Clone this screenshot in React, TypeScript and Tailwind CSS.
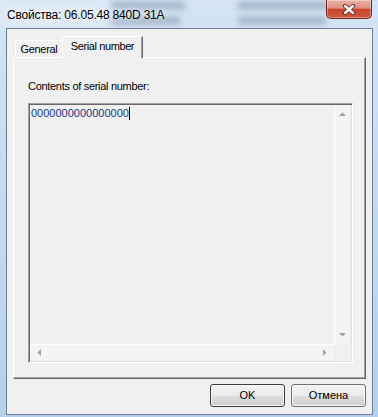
import React from 'react';

const font = { fontFamily: '"Liberation Sans", Arial, sans-serif' };

type Dir = 'up' | 'down' | 'left' | 'right';

const arrowPoints: Record<Dir, string> = {
  up: '0,4 7,4 3.5,0.5',
  down: '0,0 7,0 3.5,3.5',
  left: '4,0 4,7 0.5,3.5',
  right: '0,0 0,7 3.5,3.5',
};

function Arrow({ dir }: { dir: Dir }) {
  const vertical = dir === 'up' || dir === 'down';
  return (
    <svg width={vertical ? 7 : 4} height={vertical ? 4 : 7} viewBox={vertical ? '0 0 7 4' : '0 0 4 7'}>
      <polygon points={arrowPoints[dir]} fill="#a3a3a3" />
    </svg>
  );
}

function CloseGlyph() {
  return (
    <svg width="14" height="11" viewBox="0 0 14 11">
      <path d="M3 2 L11 9 M11 2 L3 9" stroke="#5b2a22" strokeWidth="4.2" strokeLinecap="round" />
      <path d="M3 2 L11 9 M11 2 L3 9" stroke="#ffffff" strokeWidth="2.4" strokeLinecap="round" />
    </svg>
  );
}

const App: React.FC = () => {
  return (
    <div
      className="relative w-[378px] h-[417px] overflow-hidden flex flex-col bg-gradient-to-b from-[#d4e4f4] to-[#b5d0ed] text-black"
      style={font}
    >
      {/* glass blur of what's behind the title bar */}
      <div className="absolute left-[110px] top-[2px] w-[75px] h-[7px] bg-[#7d8ea4] opacity-60 blur-[3px]" />
      <div className="absolute left-[110px] top-[17px] w-[70px] h-[7px] bg-[#7d8ea4] opacity-60 blur-[3px]" />
      <div className="absolute left-[238px] top-[2px] w-[90px] h-[7px] bg-[#7d8ea4] opacity-60 blur-[3px]" />
      <div className="absolute left-[238px] top-[17px] w-[88px] h-[7px] bg-[#7d8ea4] opacity-60 blur-[3px]" />
      <div className="absolute left-[0px] top-[0px] w-[110px] h-[28px] bg-[#e8f0f9] opacity-60 blur-[6px]" />

      {/* title bar */}
      <div className="relative h-[28px] flex justify-between items-start">
        <div className="pl-[7px] pt-[8px] text-[12px] leading-[14px] tracking-[-0.2px] text-black [text-shadow:0_0_6px_#ffffff]">
          Свойства: 06.05.48 840D 31A
        </div>
        <div className="mr-[6px] w-[46px] h-[19px] rounded-b-[5px] border border-t-0 border-[#6a2a20] bg-[linear-gradient(#ebb3a6_0%,#dc8f7e_45%,#c8442c_52%,#d2583c_100%)] shadow-[inset_0_0_0_1px_rgba(255,255,255,0.35)] flex items-center justify-center">
          <CloseGlyph />
        </div>
      </div>

      {/* client area */}
      <div className="relative ml-[6px] w-[367px] h-[387px] border border-[#6f7f93] bg-[#f0f0f0] flex flex-col text-[11px] leading-[13px]">
        {/* tab headers */}
        <div className="mt-[7px] h-[21px] pl-[8px] flex items-end">
          <div className="w-[48px] h-[17px] border-t border-l border-white border-r border-r-[#a0a0a0] rounded-tl-[2px] pt-[2px] flex justify-center tracking-[-0.3px]">
            General
          </div>
          <div className="relative z-10 -ml-px -mb-px w-[81px] h-[22px] bg-[#f0f0f0] border-t border-l border-white border-r border-r-[#696969] shadow-[inset_-1px_0_#a0a0a0] rounded-tl-[2px] pt-[3px] flex justify-center tracking-[-0.4px]">
            Serial number
          </div>
        </div>

        {/* tab panel */}
        <div className="ml-[6px] w-[353px] h-[322px] border-t border-l border-white border-r border-b border-r-[#696969] border-b-[#696969] shadow-[inset_-1px_-1px_#a0a0a0] flex flex-col pl-[14px] pt-[22px]">
          <div className="tracking-[-0.3px]">Contents of serial number:</div>

          {/* read-only multiline textbox */}
          <div className="mt-[10px] w-[325px] h-[260px] border border-t-[#a0a0a0] border-l-[#a0a0a0] border-r-white border-b-white shadow-[inset_1px_1px_#696969,inset_-1px_-1px_#e3e3e3] p-px">
            <div className="w-full h-full grid grid-cols-[1fr_17px] grid-rows-[1fr_17px] bg-[#f0f0f0]">
              <div className="pl-[1px] pt-[2px] text-[11px] leading-[13px] text-[#17378a]">
                0000000000000000
                <span className="inline-block w-px h-[13px] bg-black align-top" />
              </div>
              <div className="bg-[#f4f4f4] border-l border-white border-r border-r-[#e8e8e8] flex flex-col items-center justify-between py-[7px]">
                <Arrow dir="up" />
                <Arrow dir="down" />
              </div>
              <div className="bg-[#f4f4f4] border-t border-white border-b border-b-[#e8e8e8] flex items-center justify-between px-[7px]">
                <Arrow dir="left" />
                <Arrow dir="right" />
              </div>
              <div className="bg-[#f0f0f0]" />
            </div>
          </div>
        </div>

        {/* dialog buttons */}
        <div className="mt-[5px] pr-[6px] flex justify-end gap-[6px]">
          <button className="w-[75px] h-[23px] rounded-[3px] border border-[#3c3c3c] shadow-[inset_0_0_0_1px_#f8f8f8] bg-[linear-gradient(#f2f2f2_0%,#ebebeb_50%,#dddddd_51%,#cfcfcf_100%)] text-[11px] leading-[13px] text-black">
            OK
          </button>
          <button className="w-[75px] h-[23px] rounded-[3px] border border-[#707070] shadow-[inset_0_0_0_1px_#f8f8f8] bg-[linear-gradient(#f2f2f2_0%,#ebebeb_50%,#dddddd_51%,#cfcfcf_100%)] text-[11px] leading-[13px] text-black">
            Отмена
          </button>
        </div>
      </div>
    </div>
  );
};

export default App;
